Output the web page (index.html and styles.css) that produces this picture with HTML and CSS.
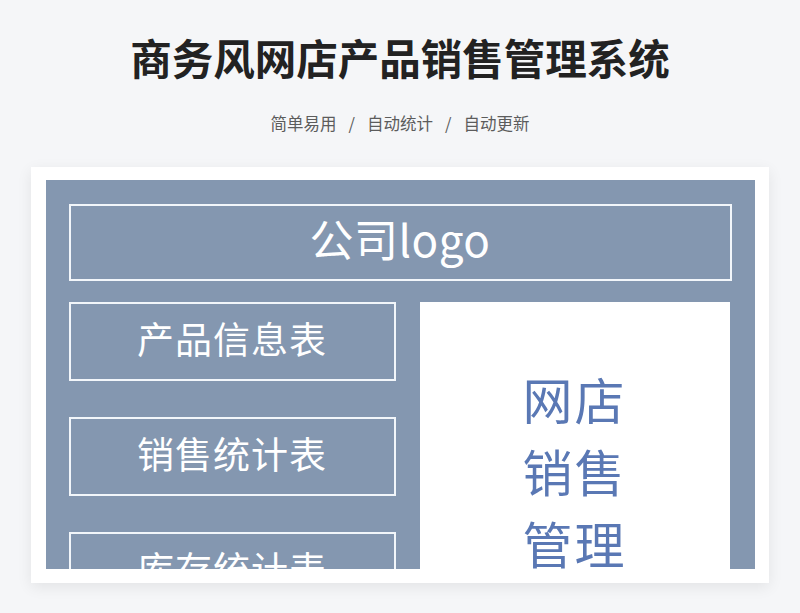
FILE: index.html
```html
<!DOCTYPE html>
<html lang="zh">
<head>
<meta charset="utf-8">
<link rel="stylesheet" href="styles.css">
</head>
<body>
<div class="page">
  <h1 class="title">商务风网店产品销售管理系统</h1>
  <p class="subtitle">简单易用<span class="sep">/</span>自动统计<span class="sep">/</span>自动更新</p>
  <div class="card">
    <div class="shot">
      <div class="logo-box">公司logo</div>
      <div class="row">
        <div class="col">
          <div class="nav-box">产品信息表</div>
          <div class="nav-box">销售统计表</div>
          <div class="nav-box">库存统计表</div>
        </div>
        <div class="panel">
          <div class="panel-text">网店<br>销售<br>管理</div>
        </div>
      </div>
    </div>
  </div>
</div>
</body>
</html>
```

FILE: styles.css
```css
html, body {
  margin: 0;
  padding: 0;
  background: #f5f6f8;
}
body {
  font-family: "Noto Sans CJK SC", "Noto Sans", sans-serif;
  width: 800px;
  height: 613px;
  overflow: hidden;
}
.page {
  display: flex;
  flex-direction: column;
  align-items: center;
}
.title {
  margin: 29px 0 0;
  font-size: 41.5px;
  line-height: 56px;
  font-weight: 700;
  color: #222;
}
.subtitle {
  margin: 26px 0 0;
  font-size: 16.5px;
  line-height: 24px;
  color: #5c5c5c;
}
.sep {
  margin: 0 12px;
}
.card {
  margin-top: 32px;
  width: 738px;
  height: 416px;
  background: #fff;
  box-shadow: 0 4px 14px rgba(0, 0, 0, 0.08);
  box-sizing: border-box;
  padding: 13px 14px 13px 15px;
  margin-left: -1px;
}
.shot {
  height: 389px;
  background: #8497b0;
  overflow: hidden;
  box-sizing: border-box;
  padding: 24px 23px 0 23px;
}
.logo-box {
  height: 77px;
  box-sizing: border-box;
  border: 2px solid #f2f6fa;
  color: #fff;
  font-size: 44px;
  display: flex;
  align-items: center;
  justify-content: center;
  padding-bottom: 9px;
  letter-spacing: 0.5px;
}
.row {
  display: flex;
  gap: 24px;
  margin-top: 21px;
}
.col {
  width: 327px;
  display: flex;
  flex-direction: column;
  gap: 36px;
}
.nav-box {
  height: 79px;
  box-sizing: border-box;
  border: 2px solid #f2f6fa;
  color: #fff;
  font-size: 37px;
  display: flex;
  align-items: center;
  justify-content: center;
  padding-bottom: 7px;
  letter-spacing: 1px;
}
.panel {
  width: 310px;
  height: 300px;
  background: #fff;
  display: flex;
  justify-content: center;
}
.panel-text {
  margin-top: 60px;
  font-size: 50px;
  line-height: 72px;
  color: #5a78b4;
  text-align: center;
  letter-spacing: 2px;
}
```
